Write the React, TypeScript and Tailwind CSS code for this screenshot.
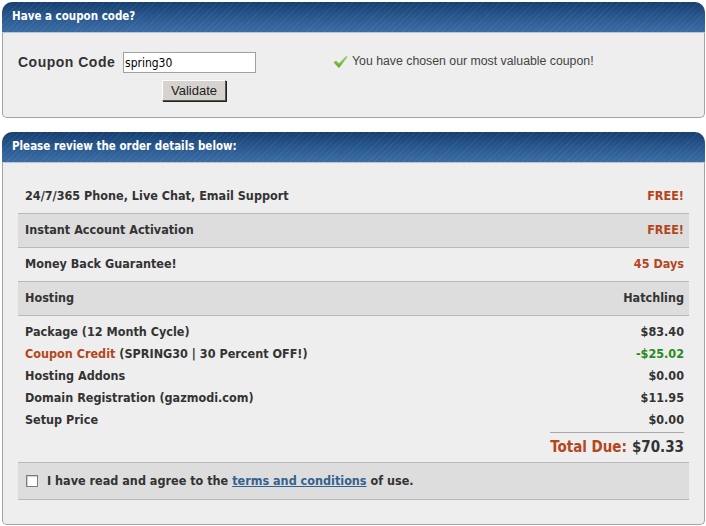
import React from 'react'

const headerBg =
    'bg-[image:repeating-linear-gradient(135deg,rgba(255,255,255,0.05)_0px,rgba(255,255,255,0.05)_1px,transparent_1px,transparent_4px),linear-gradient(to_bottom,#163f70,#2c5c93_60%,#3a6ca3)]'

function Panel({ title, children }: { title: string; children: React.ReactNode }) {
    return (
        <div className="w-[703px]">
            <div
                className={`flex h-[31px] items-center rounded-t-[10px] border-b border-[#b9c4d0] px-[10px] text-[11.5px] font-bold text-white ${headerBg}`}
            >
                {title}
            </div>
            <div className="rounded-b-[5px] border border-t-0 border-[#a3a3a3] bg-[#eeeeee]">{children}</div>
        </div>
    )
}

function CheckMark() {
    return (
        <svg width="15" height="14" viewBox="0 0 15 14" className="shrink-0">
            <defs>
                <linearGradient id="ck" x1="0" y1="0" x2="0" y2="1">
                    <stop offset="0" stopColor="#a5d86a" />
                    <stop offset="1" stopColor="#5ea52a" />
                </linearGradient>
            </defs>
            <path d="M0.5 7.5 L3 5.5 L6 8.5 L13.5 0.5 L14.5 2 L6 13 Z" fill="url(#ck)" />
        </svg>
    )
}

interface Row {
    label: string
    value: string
    shaded?: boolean
    valueColor: string
}

const featureRows: Row[] = [
    { label: '24/7/365 Phone, Live Chat, Email Support', value: 'FREE!', valueColor: 'text-[#b3461c]' },
    { label: 'Instant Account Activation', value: 'FREE!', shaded: true, valueColor: 'text-[#b3461c]' },
    { label: 'Money Back Guarantee!', value: '45 Days', valueColor: 'text-[#b3461c]' },
    { label: 'Hosting', value: 'Hatchling', shaded: true, valueColor: 'text-[#333333]' },
]

export default function App() {
    const body = "font-['DejaVu_Sans_Condensed','DejaVu_Sans',sans-serif]"

    return (
        <div className={`min-h-[526px] w-[706px] bg-white pl-[2px] pt-[2px] ${body}`}>
            <Panel title="Have a coupon code?">
                <div className="flex pb-[16px] pl-[15px] pt-[19px]">
                    <div className="flex h-[21px] w-[105px] items-center font-['Liberation_Sans',Arial,sans-serif] text-[14px] font-bold tracking-[0.5px] text-[#333333]">
                        Coupon Code
                    </div>
                    <div className="flex flex-col items-center gap-[7px]">
                        <input
                            defaultValue="spring30"
                            className="h-[21px] w-[133px] border border-[#a0a0a0] bg-white px-[1px] text-[12px] text-black outline-none"
                        />
                        <button className="ml-[9px] h-[21px] w-[64px] border border-b-[#555] border-l-[#fff] border-r-[#555] border-t-[#fff] bg-[#d6d3ce] font-['Liberation_Sans',Arial,sans-serif] text-[13px] text-[#222] shadow-[1px_1px_0_#222]">
                            Validate
                        </button>
                    </div>
                    <div className="ml-[77px] flex h-[19px] items-center gap-[4px] font-['Liberation_Sans',Arial,sans-serif] text-[12.3px] text-[#444444]">
                        <CheckMark />
                        <span>You have chosen our most valuable coupon!</span>
                    </div>
                </div>
            </Panel>

            <div className="mt-[14px]">
                <Panel title="Please review the order details below:">
                    <div className="px-[15px] pb-[24px] pt-[17px] text-[12.5px] font-bold text-[#333333]">
                        {featureRows.map((r) => (
                            <div
                                key={r.label}
                                className={`flex h-[34px] items-center justify-between border-b border-[#b9b9b9] pl-[7px] pr-[5px] ${r.shaded ? 'bg-[#dddddd]' : ''}`}
                            >
                                <span>{r.label}</span>
                                <span className={r.valueColor}>{r.value}</span>
                            </div>
                        ))}

                        <div className="pl-[7px] pr-[5px] pt-[5px]">
                            <div className="flex h-[22px] items-center justify-between">
                                <span>Package (12 Month Cycle)</span>
                                <span>$83.40</span>
                            </div>
                            <div className="flex h-[22px] items-center justify-between">
                                <span>
                                    <span className="text-[#b3461c]">Coupon Credit</span> (SPRING30 | 30 Percent OFF!)
                                </span>
                                <span className="text-[#2a8a22]">-$25.02</span>
                            </div>
                            <div className="flex h-[22px] items-center justify-between">
                                <span>Hosting Addons</span>
                                <span>$0.00</span>
                            </div>
                            <div className="flex h-[22px] items-center justify-between">
                                <span>Domain Registration (gazmodi.com)</span>
                                <span>$11.95</span>
                            </div>
                            <div className="flex h-[22px] items-center justify-between">
                                <span>Setup Price</span>
                                <span>$0.00</span>
                            </div>
                            <div className="ml-auto mt-[1px] w-[134px] border-t border-[#a8a8a8]" />
                            <div className="flex h-[29px] items-center justify-end text-[15px]">
                                <span className="text-[#b3461c]">Total Due:</span>
                                <span className="ml-[5px]">$70.33</span>
                            </div>
                        </div>

                        <div className="flex h-[38px] items-center border-y border-[#b9b9b9] bg-[#dddddd] pl-[8px]">
                            <input
                                type="checkbox"
                                className="h-[12px] w-[12px] appearance-none border border-[#7d7d7d] bg-white shadow-[inset_1px_1px_1px_#ccc]"
                            />
                            <span className="ml-[9px]">
                                I have read and agree to the{' '}
                                <a href="#" className="text-[#33628f] underline">
                                    terms and conditions
                                </a>{' '}
                                of use.
                            </span>
                        </div>
                    </div>
                </Panel>
            </div>
        </div>
    )
}
